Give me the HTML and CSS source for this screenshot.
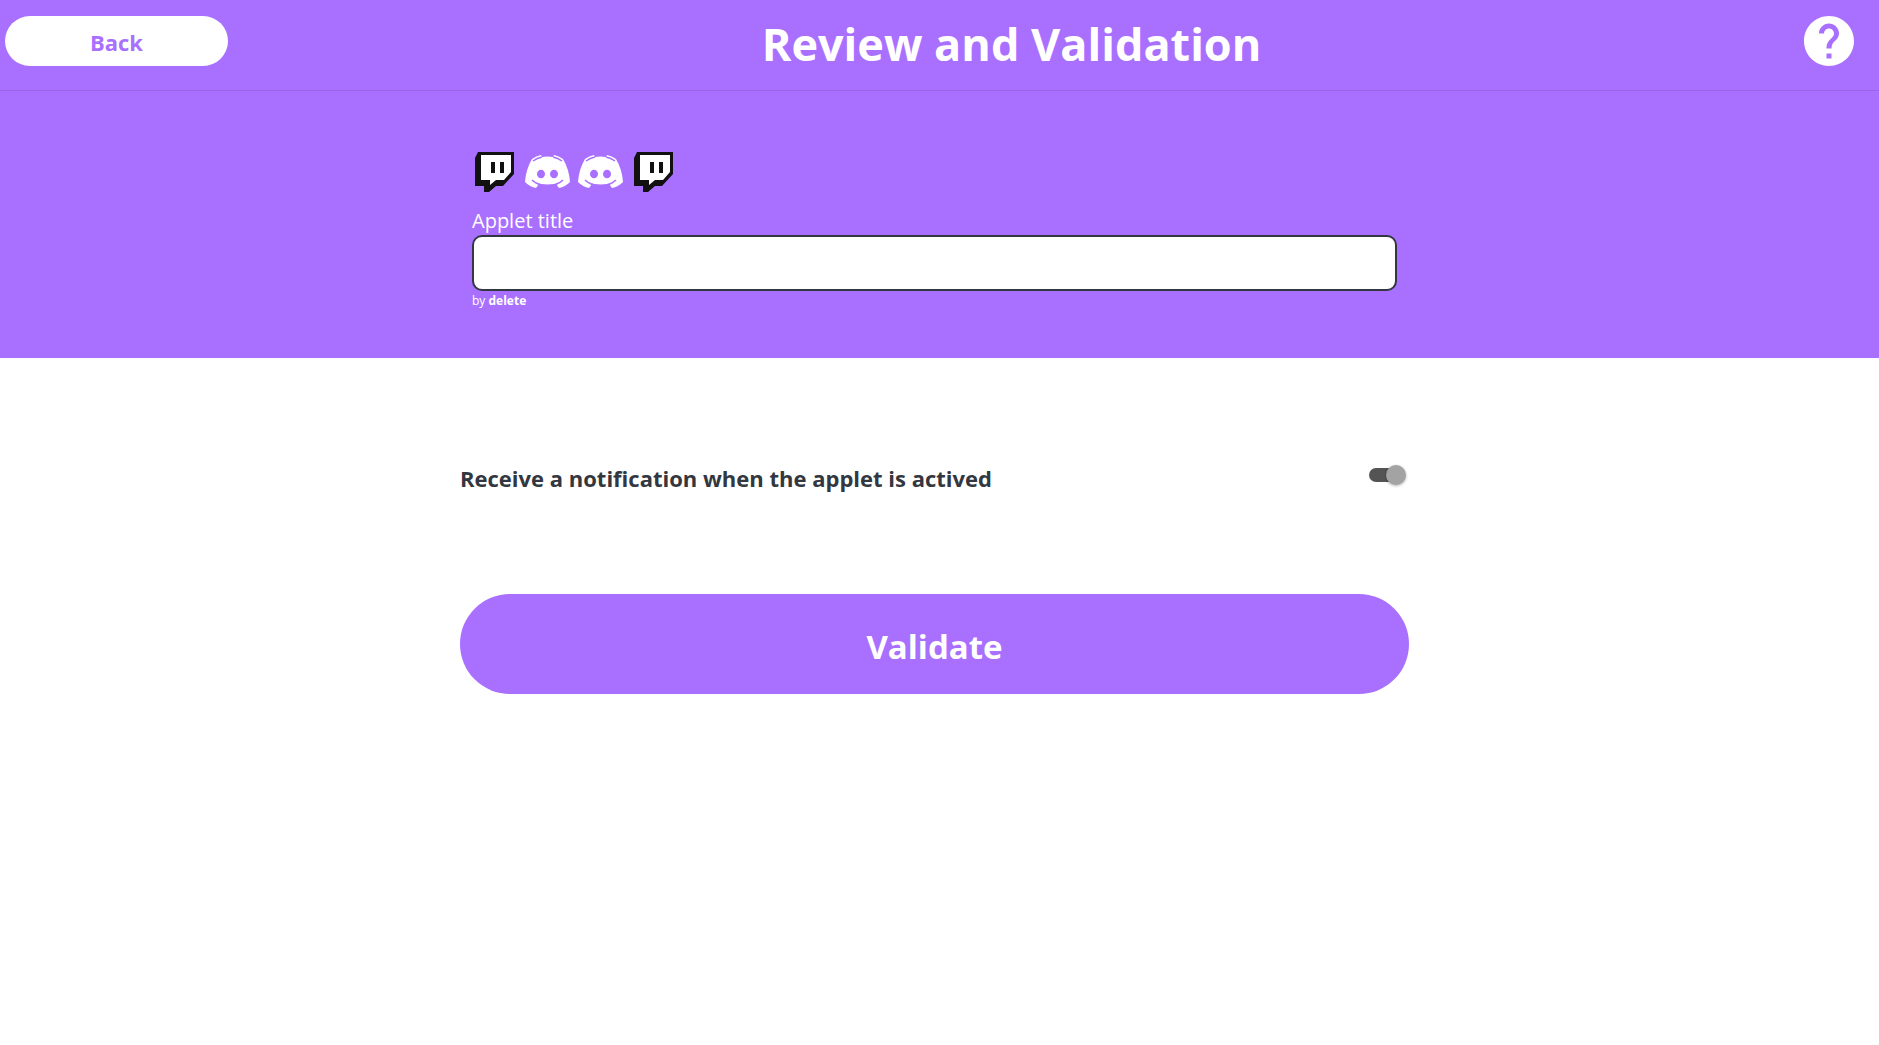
FILE: index.html
```html
<!DOCTYPE html>
<html lang="en">
<head>
<meta charset="utf-8">
<meta name="viewport" content="width=device-width, initial-scale=1">
<title>Review and Validation</title>
<link rel="stylesheet" href="styles.css">
</head>
<body>
<svg class="sprite" aria-hidden="true">
  <symbol id="twitch" viewBox="0 0 45 45">
    <path fill="#111" d="M6 2H42V24L31 36H24L17 42H12V36H3V8Z"/>
    <path fill="#fff" d="M9 5H39V22L32 30H24L18 35V30H9Z"/>
    <path fill="#111" d="M19 12h4v11h-4zM28 12h4v11h-4z"/>
  </symbol>
  <symbol id="discord" viewBox="0 0 45 45">
    <path fill="#fff" d="M7 9Q11 6 16 5L17 7Q22 6 28 7L29 5Q34 6 38 9 44 19 45 32 40 37 34 38L31 34 35 32Q23 37 10 32L14 34 11 38Q5 37 0 32 1 19 7 9Z"/>
    <path fill="none" stroke="#a970ff" stroke-width="1.500" d="M8 11Q12 8 17 7M37 11Q33 8 28 7M7 30Q10 33 15 35M38 30Q35 33 30 35"/>
    <ellipse cx="16" cy="24" rx="4" ry="4.300" fill="#a970ff"/>
    <ellipse cx="29" cy="24" rx="4" ry="4.300" fill="#a970ff"/>
  </symbol>
</svg>
<header class="topbar">
  <button class="back" type="button">Back</button>
  <h1 class="title">Review and Validation</h1>
  <button class="help" type="button" aria-label="Help">
    <svg viewBox="2 2 20 20" aria-hidden="true"><path fill="currentColor" d="M12 2C6.480 2 2 6.480 2 12s4.480 10 10 10 10-4.480 10-10S17.520 2 12 2zm1 17h-2v-2h2v2zm2.070-7.750-.9.920C13.450 12.900 13 13.500 13 15h-2v-.5c0-1.100.450-2.100 1.170-2.830l1.240-1.260c.370-.360.590-.860.590-1.410 0-1.100-.9-2-2-2s-2 .9-2 2H8c0-2.210 1.790-4 4-4s4 1.790 4 4c0 .880-.360 1.680-.930 2.250z"/></svg>
  </button>
</header>
<section class="hero">
  <div class="applet">
    <div class="services">
      <svg class="service" role="img" aria-label="Twitch"><use href="#twitch"/></svg>
      <svg class="service" role="img" aria-label="Discord"><use href="#discord"/></svg>
      <svg class="service" role="img" aria-label="Discord"><use href="#discord"/></svg>
      <svg class="service" role="img" aria-label="Twitch"><use href="#twitch"/></svg>
    </div>
    <label class="applet-label" for="applet-title">Applet title</label>
    <input class="applet-input" id="applet-title" type="text">
    <p class="author">by <strong>delete</strong></p>
  </div>
</section>
<main class="content">
  <div class="option">
    <label for="notify">Receive a notification when the applet is actived</label>
    <input class="switch" id="notify" type="checkbox" role="switch" checked>
  </div>
  <button class="validate" type="button">Validate</button>
</main>
</body>
</html>
```
FILE: styles.css
```css
* {
  box-sizing: border-box;
}

body {
  margin: 0;
  background: #fff;
  color: #333740;
  font-family: "Open Sans", "Noto Sans", sans-serif;
}

button {
  border: 0;
  font-family: inherit;
  font-weight: 700;
  cursor: pointer;
}

.sprite {
  position: absolute;
  width: 0;
  height: 0;
}

.topbar {
  display: flex;
  align-items: flex-start;
  padding: 16px 0 24px 5px;
  border-bottom: 1px solid #9965e4;
  background: #a970ff;
}

.back {
  width: 223px;
  height: 50px;
  padding: 2px 0 0;
  border-radius: 25px;
  background: #fff;
  color: #a970ff;
  font-size: 22px;
}

.title {
  flex: 1;
  height: 50px;
  margin: 0;
  padding-left: 16px;
  color: #fff;
  font-size: 45px;
  font-weight: 700;
  line-height: 56px;
  text-align: center;
}

.help {
  width: 50px;
  height: 50px;
  margin: 0 25px;
  padding: 0;
  background: none;
  color: #fff;
}

.help svg {
  display: block;
}

.hero {
  padding: 59px 10px 48px 0;
  background: #a970ff;
  color: #fff;
}

.applet {
  max-width: 949px;
  margin: 0 auto;
  padding: 0 12px;
}

.services {
  display: flex;
  gap: 8px;
}

.service {
  width: 45px;
  height: 45px;
}

.applet-label {
  display: block;
  margin-top: 12px;
  font-size: 20px;
  line-height: 28px;
}

.applet-input {
  display: block;
  width: 100%;
  height: 56px;
  padding: 0 16px;
  border: 2px solid #333740;
  border-radius: 10px;
  background: #fff;
  font: inherit;
  font-size: 20px;
}

.author {
  margin: 0;
  padding: 1px 0;
  font-size: 12px;
  line-height: 17px;
}

.author strong {
  font-weight: 700;
}

.content {
  padding: 100px 10px 40px 0;
}

.option {
  display: flex;
  align-items: center;
  justify-content: space-between;
  max-width: 949px;
  margin: 0 auto;
  padding-right: 3px;
  font-size: 22px;
  font-weight: 700;
  line-height: 36px;
}

.option label {
  padding-top: 2px;
}

.switch {
  position: relative;
  width: 37px;
  height: 20px;
  margin: 0 0 4px;
  appearance: none;
  cursor: pointer;
}

.switch::before {
  content: "";
  position: absolute;
  inset: 3px 3px 3px 0;
  border-radius: 7px;
  background: #545454;
}

.switch::after {
  content: "";
  position: absolute;
  top: 0;
  left: 0;
  width: 20px;
  height: 20px;
  border-radius: 50%;
  background: #a3a3a3;
  box-shadow: 0 1px 3px rgba(0, 0, 0, 0.3);
}

.switch:checked::after {
  left: auto;
  right: 0;
}

.validate {
  display: block;
  width: 100%;
  max-width: 949px;
  height: 100px;
  margin: 98px auto 0;
  padding: 4px 0 0;
  border-radius: 50px;
  background: #a970ff;
  color: #fff;
  font-size: 33px;
}
```
